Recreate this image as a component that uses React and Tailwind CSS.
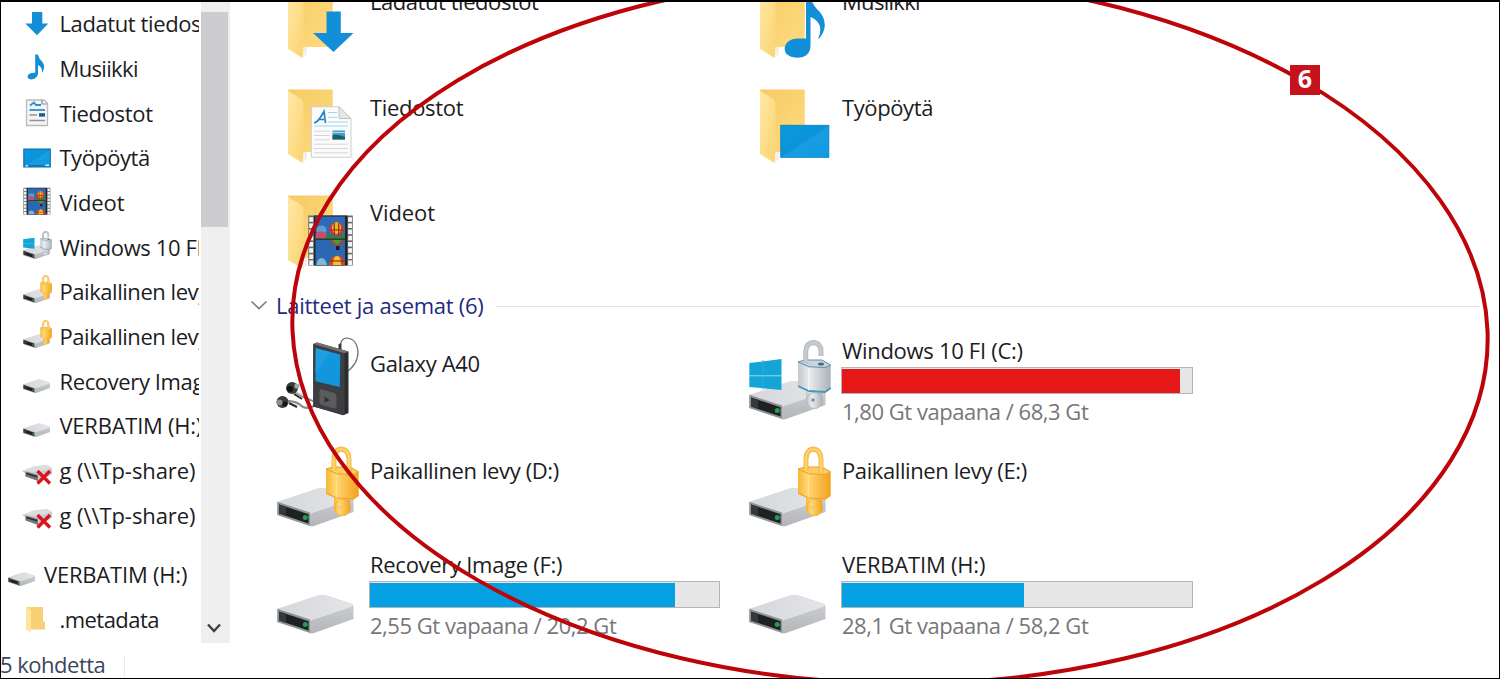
import React from 'react';

/* ---------- shared artwork (drawn on a 100 x 107 tile) ---------- */

function Defs() {
  return (
    <svg className="absolute w-0 h-0">
      <defs>
        <linearGradient id="folderBack" x1="0" y1="0" x2="1" y2="1">
          <stop offset="0" stopColor="#f5cb63" />
          <stop offset="1" stopColor="#ffdb80" />
        </linearGradient>
        <linearGradient id="folderFront" x1="0" y1="0" x2="1" y2="1">
          <stop offset="0" stopColor="#ffe9a8" />
          <stop offset="1" stopColor="#fbd36f" />
        </linearGradient>
        <linearGradient id="gold" x1="0" y1="0" x2="1" y2="0">
          <stop offset="0" stopColor="#f8b733" />
          <stop offset="0.3" stopColor="#ffd873" />
          <stop offset="1" stopColor="#f3a21c" />
        </linearGradient>
        <linearGradient id="silver" x1="0" y1="0" x2="1" y2="0">
          <stop offset="0" stopColor="#c3c8cd" />
          <stop offset="0.35" stopColor="#e9ecef" />
          <stop offset="1" stopColor="#aab1b8" />
        </linearGradient>
        <linearGradient id="driveTop" x1="0" y1="0" x2="1" y2="0">
          <stop offset="0" stopColor="#d6d7db" />
          <stop offset="1" stopColor="#e4e5e8" />
        </linearGradient>
        <linearGradient id="driveSide" x1="0" y1="0" x2="0" y2="1">
          <stop offset="0" stopColor="#d3d4d7" />
          <stop offset="1" stopColor="#b3b5b9" />
        </linearGradient>
        <linearGradient id="desk" x1="0" y1="0" x2="1" y2="1">
          <stop offset="0" stopColor="#079ade" />
          <stop offset="0.5" stopColor="#0c93d8" />
          <stop offset="0.52" stopColor="#1a9de0" />
          <stop offset="1" stopColor="#0d9ae2" />
        </linearGradient>
      </defs>
    </svg>
  );
}

function Folder() {
  return (
    <>
      <path d="M18 14.5H62.8V77H33L18 60Z" fill="url(#folderBack)" />
      <path d="M18 15Q19 17 24 19.5L30 23Q33.6 25 33.6 30V77L32.5 88L18 79Z" fill="url(#folderFront)" />
      <path d="M32.5 88L33.6 77H37V84Z" fill="#f3f0ea" />
    </>
  );
}

function Drive() {
  return (
    <>
      <path d="M7.3 68L48 54.6Q54 53.4 58 55L81 62.5Q83.5 63.5 83.5 66V78L44 92Q41 93 39 91.8L7.3 81Z" fill="url(#driveSide)" />
      <path d="M7.3 68L48 54.6Q54 53.4 58 55L81 62.5Q84 64 81 66L41 79.5Z" fill="url(#driveTop)" />
      <path d="M7.3 67.8L40 78.6V91.8L7.3 81Z" fill="#8f9296" />
      <path d="M9 70.4L38.5 80.2V89.6L9 79.6Z" fill="#1d2122" />
      <path d="M9 70.4L16 72.7V82L9 79.6Z" fill="#34393a" />
      <circle cx="35.3" cy="83.6" r="2.5" fill="#1fa04a" />
    </>
  );
}

function Lock({ open }) {
  const fill = open ? 'url(#silver)' : 'url(#gold)';
  const edge = open ? '#4a97bb' : '#e8a032';
  const shackle = open ? '#c3c9ce' : '#fbc650';
  const dark = open ? '#a3abb1' : '#ecab3a';
  const arc = open ? 'M63.8 37V24Q64.5 15.5 72 15.5Q79 16.5 79 24V29' : 'M64 37V24Q65 15 71.5 15Q78.5 16 79 25V39';
  return (
    <>
      <path d="M64 60H80V74Q79 82 72 82Q64 81 64 73Z" fill={fill} />
      <circle cx="72.5" cy="73.5" r="8" fill={fill} stroke={dark} strokeWidth="0.7" />
      <circle cx="71" cy="73" r="1.7" fill={open ? '#7f8b92' : '#d9c9a0'} />
      <path d="M56 35L63 33H80L88.7 38V62L83 66L67 65L56 60Z" fill={fill} />
      <path d="M56 35L63 33H80L88.7 38L83 40.5L67 39.8Z" fill={open ? '#ccd2d6' : '#ffce5c'} stroke={edge} strokeWidth="1" />
      <path d="M56 59L67 64L83 65L88.7 61" fill="none" stroke={edge} strokeWidth={open ? 1.8 : 1} />
      {open && <ellipse cx="79" cy="37" rx="3" ry="1.5" fill="#5d6468" />}
      <path d="M66.5 41V63.5" stroke={open ? '#f6f8f9' : '#ffe39b'} strokeWidth="0.8" />
      <path d={arc} fill="none" stroke={dark} strokeWidth="4.8" />
      <path d={arc} fill="none" stroke={shackle} strokeWidth="3.8" />
      {!open && <path d={arc} fill="none" stroke="#ffe08a" strokeWidth="1" />}
    </>
  );
}

function WindowsLogo() {
  return (
    <>
      <path d="M7.3 36L39.5 32V63L7.3 60Z" fill="#12a5d6" />
      <path d="M7 48.8H40" stroke="#a9dff1" strokeWidth="0.9" />
      <path d="M21 33V62.5" stroke="#33b1da" strokeWidth="0.8" />
    </>
  );
}

function FilmStrip() {
  const holes = [36.2, 42.4, 48.6, 54.8, 61, 67.2, 73.4, 79.4];
  return (
    <>
      <rect x="38.3" y="34.5" width="44.5" height="50" fill="#68696b" />
      <rect x="44" y="34.5" width="33.4" height="50" fill="#222428" />
      {holes.map((y) => (
        <React.Fragment key={y}>
          <rect x="39.2" y={y} width="4" height="4.6" fill="#f2f3f3" />
          <rect x="78.1" y={y} width="4" height="4.6" fill="#f2f3f3" />
        </React.Fragment>
      ))}
      <rect x="45.5" y="35.5" width="29.5" height="23" fill="#2c6bb8" />
      <rect x="45.5" y="58.5" width="29.5" height="25.5" fill="#2b68b2" />
      <path d="M45.5 54Q52 50 60 54T75 53V58.5H45.5Z" fill="#3a7d38" />
      <ellipse cx="51.5" cy="49" rx="5" ry="4.5" fill="#5a9dd0" />
      <path d="M46 52Q51 48 57 53L55 57.5H46Z" fill="#cf4874" />
      <ellipse cx="66.5" cy="48" rx="7.3" ry="6.8" fill="#d93a26" />
      <ellipse cx="66.5" cy="47" rx="4.6" ry="6" fill="#f0b424" />
      <path d="M64.3 42V54M68.7 42V54M59.5 49H73.5" stroke="#8d2c1a" strokeWidth="1.2" />
      <path d="M60 59Q67 71 74 59Z" fill="#a8452c" />
      <path d="M63 59Q67 68 71 59Z" fill="#4c9b3b" />
      <path d="M45.5 57.5H75V59H45.5Z" fill="#23402a" />
      <path d="M66 65H69.5V69H66Z" fill="#201a1a" />
      <path d="M59 84Q60 74.5 67 74.5Q74 74.5 75 84Z" fill="#dd4423" />
      <path d="M63 84Q63 75 67 75Q71 75 71 84Z" fill="#f3c52a" />
      <path d="M60 80H74" stroke="#7b2b1c" strokeWidth="1.1" />
      <path d="M46.5 84Q47 77 52 77Q56 78 57 84Z" fill="#7fb9d0" />
    </>
  );
}

function Tile({ children }) {
  return (
    <svg className="w-[100px] h-[107px] shrink-0 overflow-visible" viewBox="0 0 100 107">
      {children}
    </svg>
  );
}

const tileArt = {
  downloads: (
    <>
      <Folder />
      <path d="M56.5 41.5H70.8V63H83.5L63.5 82L43 63H56.5Z" fill="#128fd8" />
    </>
  ),
  music: (
    <>
      <Folder />
      <path d="M64 26H68.5Q70 35 77 41Q84 49 82.5 58Q81 65 76 69.5Q80 60 77 54Q74 49 68.5 47V76Q68 87.5 55 87.8Q43 87 42.6 79Q43.5 69 56 68.5H64Z" fill="#128fd8" />
    </>
  ),
  documents: (
    <>
      <Folder />
      <path d="M41.3 31.8H69L81 44V82.3H41.3Z" fill="#fbfbfc" stroke="#c9cbce" strokeWidth="0.9" />
      <path d="M69 31.8V43.5H81Z" fill="#e6e8ea" stroke="#b9bcc0" strokeWidth="0.9" />
      <path d="M44 48Q48 47.5 54 36.5L55.5 48M48.5 44.5H54" fill="none" stroke="#1b86c4" strokeWidth="1.7" />
      <path d="M58 37.5H67M58 42.3H67M58 47H78M44 51H78" stroke="#9acfe8" strokeWidth="0.9" />
      <path d="M44 56.2H60M44 60.5H60M44 64.8H60M44 69.2H78M44 73.5H78M44 77.8H78" stroke="#cfd2d6" strokeWidth="0.9" />
      <rect x="62.5" y="55.5" width="12.5" height="9" fill="#3f9ccc" />
      <path d="M62.5 60Q67 59 75 62V64.5H62.5Z" fill="#1d5f63" />
      <path d="M63 57.5H75" stroke="#a9dcf2" strokeWidth="1.2" />
    </>
  ),
  desktop: (
    <>
      <Folder />
      <rect x="38.7" y="50.2" width="48.2" height="32.2" fill="url(#desk)" stroke="#0a78bd" strokeWidth="0.7" />
    </>
  ),
  videos: (
    <>
      <Folder />
      <FilmStrip />
    </>
  ),
  player: (
    <>
      <path d="M69.5 23Q70 11 77 11Q87 12 88 25Q88 38 75 46" fill="none" stroke="#6d6d6d" strokeWidth="1.2" />
      <path d="M68.5 17L71.5 16.5V26H68.5Z" fill="#3c3c3c" />
      <path d="M22 63Q34 71 44 74M13 74Q26 73 33 80Q38 82 44 79" fill="none" stroke="#8c8c8c" strokeWidth="2.4" />
      <path d="M24 64Q34 70 44 73" fill="none" stroke="#f0f0f0" strokeWidth="0.9" />
      <path d="M24 67L32 72M19 76L27 80" stroke="#2b2b2b" strokeWidth="2" />
      <circle cx="22" cy="61" r="6" fill="#3a3a3a" />
      <circle cx="20" cy="62" r="3" fill="#111" />
      <circle cx="27" cy="59" r="2.6" fill="#a9a9a9" />
      <circle cx="12.5" cy="75" r="6" fill="#3a3a3a" />
      <circle cx="9.5" cy="75.5" r="3" fill="#8d8d8d" />
      <circle cx="15" cy="77" r="2.4" fill="#161616" />
      <path d="M43.3 17L47 15.4L78.5 24.5V86L73 88.3L43.3 79.5Z" fill="#2b2c2e" />
      <path d="M43.3 17L74.5 26.2V88L43.3 79.5Z" fill="#3d3e41" />
      <path d="M43.3 17L47 15.4L78.5 24.5L74.5 26.2Z" fill="#707275" />
      <path d="M45.8 21.3L70.3 27.6L69.8 60L45.5 54.2Z" fill="#1296dd" />
      <path d="M45.8 21.3L60 25L45.5 46Z" fill="#1f9fe2" />
      <path d="M51 62.2L64.5 66Q66.5 67 66.5 69V80Q66 82 63.5 81.2L51 77.7Q49.5 77 49.5 75V64Q49.6 62 51 62.2Z" fill="#5b5c5f" />
      <path d="M54.5 69.5L60 73.3L54.5 75.5Z" fill="#303133" />
    </>
  ),
  windows: (
    <>
      <Drive />
      <WindowsLogo />
      <Lock open />
    </>
  ),
  locked: (
    <>
      <Drive />
      <Lock />
    </>
  ),
  drive: <Drive />,
};

/* ---------- navigation pane ---------- */

const smallArt = {
  downloads: (
    <path d="M10 3H20.3V14.5H26.3L15 26.3L3.3 14.5H10Z" fill="#128fd8" />
  ),
  music: (
    <path d="M13.2 1.5H15.8Q17 6 20.5 9Q24 14 20 20Q20.5 14 16 12V21Q15 26 9 26.4Q5.5 26 5.5 23.5Q6.3 19.4 13.2 19.8Z" fill="#128fd8" />
  ),
  documents: (
    <>
      <path d="M4.5 2H22L25.5 5.5V27.5H4.5Z" fill="#f3f4f5" stroke="#b9bbbe" strokeWidth="1.3" />
      <path d="M20 2V6H25.5" fill="none" stroke="#8d9093" strokeWidth="1.2" />
      <path d="M8 7.5L12 4.5L14 7H19" stroke="#2a94c9" strokeWidth="1.8" fill="none" />
      <path d="M7.5 12H23" stroke="#2a86bd" strokeWidth="1.7" />
      <path d="M7.5 17H15M7.5 22.5H23" stroke="#8f9498" strokeWidth="1.5" />
      <rect x="17" y="15.2" width="6" height="3.4" fill="#175c84" />
    </>
  ),
  desktop: (
    <>
      <rect x="1.8" y="6" width="26.5" height="18" fill="url(#desk)" stroke="#0b6aa3" strokeWidth="1" />
      <path d="M2.5 22.8H22" stroke="#0b72b0" strokeWidth="1.4" />
      <path d="M3.5 22.8H6M23.5 22.3H27" stroke="#d6effb" strokeWidth="1.5" />
    </>
  ),
};

function SmallIcon({ kind }) {
  if (smallArt[kind]) {
    return <svg className="w-[30px] h-[30px] shrink-0" viewBox="0 0 30 30">{smallArt[kind]}</svg>;
  }
  if (kind === 'videos') {
    return (
      <svg className="w-[30px] h-[30px] shrink-0" viewBox="36 33 49.5 56" preserveAspectRatio="none">
        <FilmStrip />
      </svg>
    );
  }
  if (kind === 'network') {
    return (
      <svg className="w-[30px] h-[30px] shrink-0" viewBox="0 0 30 30">
        <path d="M0 15L12 10.5L25 9L30 12V18L17 25L3 20V17Z" fill="#c9cbce" />
        <path d="M0 15L12 10.5L25 9L30 12L17 16Z" fill="#dcdde0" />
        <path d="M3.5 15.5L16 19V25L3.5 20.5Z" fill="#75787c" />
        <path d="M4.5 17.5L15 20.8" stroke="#2a2d2f" strokeWidth="1.6" />
        <path d="M15.5 15L28 27.5M28 15L15.5 27.5" stroke="#d8161c" strokeWidth="3.4" />
      </svg>
    );
  }
  if (kind === 'folder') {
    return (
      <svg className="w-[30px] h-[30px] shrink-0" viewBox="0 0 30 30">
        <path d="M4 3H21V17L23 18V25.5H10L4 22Z" fill="#fad074" />
        <path d="M4 3Q9 5 9 8V28L4 26Z" fill="#ffe6a0" />
      </svg>
    );
  }
  return (
    <svg className="w-[31px] h-[31px] -mr-px -mt-1 shrink-0" viewBox="4 10 88 88">
      {tileArt[kind]}
    </svg>
  );
}

const navItems = [
  { kind: 'downloads', label: 'Ladatut tiedostot', fit: 'tracking-[-0.4px]' },
  { kind: 'music', label: 'Musiikki', fit: 'tracking-[-0.65px]' },
  { kind: 'documents', label: 'Tiedostot', fit: 'tracking-[-0.32px]' },
  { kind: 'desktop', label: 'Työpöytä', fit: 'tracking-[-0.5px]' },
  { kind: 'videos', label: 'Videot', fit: 'tracking-[-0.1px]' },
  { kind: 'windows', label: 'Windows 10 FI (C:)', fit: 'tracking-[-0.38px]' },
  { kind: 'locked', label: 'Paikallinen levy (D:)', fit: 'tracking-[-0.45px]' },
  { kind: 'locked', label: 'Paikallinen levy (E:)', fit: 'tracking-[-0.45px]' },
  { kind: 'drive', label: 'Recovery Image (F:)', fit: 'tracking-[-0.38px]' },
  { kind: 'drive', label: 'VERBATIM (H:)', fit: 'tracking-[-0.25px]' },
  { kind: 'network', label: 'g (\\\\Tp-share)', fit: 'tracking-[-0.07px]' },
  { kind: 'network', label: 'g (\\\\Tp-share)', fit: 'tracking-[-0.07px]' },
];

function NavRow({ kind, label, fit, root }) {
  return (
    <div className={`flex h-[44.7px] shrink-0 items-center whitespace-nowrap ${root ? 'pl-[7px] gap-[7px]' : 'pl-[22px] gap-[7.5px]'}`}>
      <SmallIcon kind={kind} />
      <span className={fit}>{label}</span>
    </div>
  );
}

function Sidebar() {
  return (
    <aside className="flex w-[230px] shrink-0">
      <nav className="flex w-[199px] flex-col overflow-hidden pt-[1.4px]">
        {navItems.map((item, i) => (
          <NavRow key={i} {...item} />
        ))}
        <div className="h-[14.5px] shrink-0" />
        <NavRow root kind="drive" label="VERBATIM (H:)" fit="tracking-[-0.2px]" />
        <NavRow kind="folder" label=".metadata" fit="tracking-[-0.55px]" />
      </nav>
      <div className="ml-0.5 flex w-[29px] flex-col justify-between bg-[#efefef] pt-3">
        <div className="h-[215px] w-[27px] bg-[#cdcdcf]" />
        <svg className="mb-[7px] ml-[5px] h-4 w-4" viewBox="0 0 16 16">
          <path d="M2 4.5L8 11L14 4.5" fill="none" stroke="#3f3f3f" strokeWidth="2.4" />
        </svg>
      </div>
    </aside>
  );
}

/* ---------- content pane ---------- */

const folders = [
  { kind: 'downloads', label: 'Ladatut tiedostot', fit: 'tracking-[-0.45px]' },
  { kind: 'music', label: 'Musiikki', fit: 'tracking-[-0.7px]' },
  { kind: 'documents', label: 'Tiedostot', fit: 'tracking-[-0.32px]' },
  { kind: 'desktop', label: 'Työpöytä', fit: 'tracking-[-0.4px]' },
  { kind: 'videos', label: 'Videot', fit: 'tracking-[-0.1px]' },
];

const drives = [
  { kind: 'player', label: 'Galaxy A40', fit: 'tracking-[-0.35px]' },
  { kind: 'windows', label: 'Windows 10 FI (C:)', fit: 'tracking-[-0.3px]', free: '1,80 Gt vapaana / 68,3 Gt', used: 96.6, color: 'bg-[#e61717]', width: 'w-[352px]' },
  { kind: 'locked', label: 'Paikallinen levy (D:)', fit: 'tracking-[-0.38px]' },
  { kind: 'locked', label: 'Paikallinen levy (E:)', fit: 'tracking-[-0.4px]' },
  { kind: 'drive', label: 'Recovery Image (F:)', fit: 'tracking-[-0.28px]', free: '2,55 Gt vapaana / 20,2 Gt', used: 87.4, color: 'bg-[#04a0e1]', width: 'w-[351px]' },
  { kind: 'drive', label: 'VERBATIM (H:)', fit: 'tracking-[-0.2px]', free: '28,1 Gt vapaana / 58,2 Gt', used: 51.9, color: 'bg-[#04a0e1]', width: 'w-[352px]' },
];

function FolderTile({ kind, label, fit }) {
  return (
    <div className="flex h-[105.5px] items-start">
      <Tile>{tileArt[kind]}</Tile>
      <span className={`pt-[16.5px] leading-[30px] whitespace-nowrap ${fit}`}>{label}</span>
    </div>
  );
}

function DriveTile({ kind, label, fit, free, used, color, width }) {
  return (
    <div className="flex h-[107px] items-start">
      <Tile>{tileArt[kind]}</Tile>
      {free ? (
        <div className={`-ml-px flex flex-col pt-2 whitespace-nowrap ${width}`}>
          <span className={`pl-px leading-[30px] ${fit}`}>{label}</span>
          <div className="mt-0.5 h-[27px] border border-[#b4b4b4] bg-[#e6e6e6] pt-px">
            <div className={`h-full ${color}`} style={{ width: `${used}%` }} />
          </div>
          <span className="mt-[2px] pl-px leading-[30px] tracking-[-0.47px] text-[#777779]">{free}</span>
        </div>
      ) : (
        <span className={`pt-[21px] leading-[30px] whitespace-nowrap ${fit}`}>{label}</span>
      )}
    </div>
  );
}

function Content() {
  return (
    <main className="flex-1 overflow-hidden">
      <div className="-mt-[30.5px] grid grid-cols-[472px_472px] pl-10">
        {folders.map((f) => (
          <FolderTile key={f.kind} {...f} />
        ))}
      </div>
      <div className="flex h-[41px] items-center pl-[19px]">
        <svg className="-mt-1 h-5 w-5" viewBox="0 0 20 20">
          <path d="M2.5 6.5L10 13.5L17.5 6.5" fill="none" stroke="#7d7d7d" strokeWidth="1.7" />
        </svg>
        <h2 className="-mt-0.5 ml-[7px] w-[220px] tracking-[-0.27px] whitespace-nowrap text-[#1f2a80]">Laitteet ja asemat (6)</h2>
        <div className="mr-5 h-px flex-1 bg-[#e4e4e4]" />
      </div>
      <div className="grid grid-cols-[472px_472px] pl-10">
        {drives.map((d) => (
          <DriveTile key={d.label} {...d} />
        ))}
      </div>
    </main>
  );
}

/* ---------- callout ring with its number ---------- */

function Callout() {
  return (
    <div className="pointer-events-none absolute inset-0">
      <svg className="h-full w-full" viewBox="0 0 1500 679">
        <ellipse
          rx="597.5"
          ry="353.2"
          transform="matrix(1 0 0.041 1 890 330.4)"
          fill="none"
          stroke="#bd0509"
          strokeWidth="4"
        />
      </svg>
      <div className="absolute top-[65px] left-[1290px] flex h-[30px] w-[30px] items-center justify-center bg-[#c6121b] pb-[3px] text-[25px] leading-none font-bold text-white">
        6
      </div>
    </div>
  );
}

export default function App() {
  return (
    <div className="relative flex h-[679px] w-[1500px] flex-col overflow-hidden bg-white font-['Open_Sans','Noto_Sans',sans-serif] text-[22px] text-[#1c1c24]">
      <Defs />
      <div className="flex h-[643px] overflow-hidden">
        <Sidebar />
        <Content />
      </div>
      <footer className="flex h-9 items-center">
        <span className="w-[124px] pt-1.5 tracking-[-0.5px] whitespace-nowrap text-[#3b4660]">5 kohdetta</span>
        <div className="mt-3 h-6 w-px bg-[#ececec]" />
      </footer>
      <Callout />
      <div className="pointer-events-none absolute inset-0 border-t-2 border-r border-b border-l border-black" />
    </div>
  );
}
